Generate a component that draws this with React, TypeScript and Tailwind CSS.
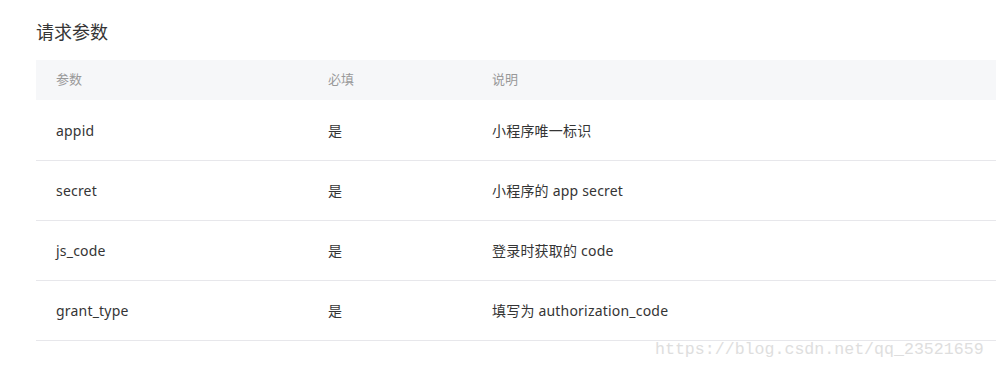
import React from "react";

const rows = [
  ["appid", "是", "小程序唯一标识"],
  ["secret", "是", "小程序的 app secret"],
  ["js_code", "是", "登录时获取的 code"],
  ["grant_type", "是", "填写为 authorization_code"],
];

export default function App() {
  return (
    <div
      className="relative w-[997px] h-[371px] bg-white overflow-hidden"
      style={{ fontFamily: '"Noto Sans", "Noto Sans CJK SC", sans-serif' }}
    >
      <div className="pl-[36px] pt-[19px]">
        <h2 className="text-[18px] leading-[26px] text-[#353535] h-[41px]">请求参数</h2>
        <div className="w-[960px]">
          <div className="flex h-[40px] items-center bg-[#f6f7f9] text-[13px] text-[#999]">
            <div className="w-[272px] pl-[20px]">参数</div>
            <div className="w-[164px] pl-[20px]">必填</div>
            <div className="flex-1 pl-[20px]">说明</div>
          </div>
          <div className="mt-[1px]">
            {rows.map((r) => (
              <div
                key={r[0]}
                className="flex h-[60px] items-center border-b border-[#e7e7eb] text-[14px] text-[#353535]"
              >
                <div className="w-[272px] pl-[20px] tracking-[0.2px]">{r[0]}</div>
                <div className="w-[164px] pl-[20px]">{r[1]}</div>
                <div className="flex-1 pl-[20px] tracking-[0.2px]">{r[2]}</div>
              </div>
            ))}
          </div>
        </div>
      </div>
      <div
        className="absolute left-[655px] top-[340px] text-[16.6px] leading-[20px] text-[#dedede]"
        style={{ fontFamily: '"Liberation Mono", "DejaVu Sans Mono", monospace' }}
      >
        https://blog.csdn.net/qq_23521659
      </div>
    </div>
  );
}
